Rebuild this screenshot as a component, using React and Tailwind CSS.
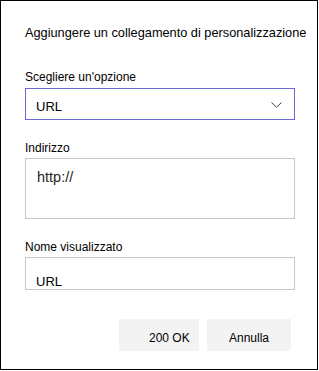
export default function App() {
  const font = { fontFamily: '"Liberation Sans", Arial, sans-serif' };
  return (
    <div className="w-[319px] h-[371px] bg-white" style={font}>
      <div className="w-[318px] h-[370px] border border-black bg-white pl-[24px] pt-[24px] flex flex-col text-black">
        <div className="text-[12.75px] leading-[16px] whitespace-nowrap">
          Aggiungere un collegamento di personalizzazione
        </div>
        <div className="mt-[28px] text-[12px] leading-[16px]">Scegliere un'opzione</div>
        <div className="mt-[3px] w-[270px] h-[32px] border border-[#6b69d6] flex items-center justify-between pl-[10px] pr-[12px]">
          <span className="text-[13px] leading-[16px] pt-[6px]">URL</span>
          <svg width="11" height="6" viewBox="0 0 11 6" className="mt-[1px]">
            <path d="M0.5 0.5 L5.5 5.2 L10.5 0.5" fill="none" stroke="#444" strokeWidth="1" />
          </svg>
        </div>
        <div className="mt-[20px] text-[12px] leading-[16px]">Indirizzo</div>
        <div className="mt-[2px] w-[270px] h-[61px] border border-[#c8c8c8] pl-[11px] pt-[6px]">
          <span className="text-[14.5px] leading-[16px] text-[#252423]">http://</span>
        </div>
        <div className="mt-[20px] text-[12px] leading-[16px]">Nome visualizzato</div>
        <div className="mt-[2px] w-[270px] h-[33px] border border-[#c8c8c8] pl-[10px] pt-[11px]">
          <span className="text-[13px] leading-[16px]">URL</span>
        </div>
        <div className="mt-[29px] w-[266px] flex justify-end gap-[8px]">
          <div className="w-[80px] h-[32px] bg-[#f3f3f3] pl-[30px] pt-[11px] text-[12px] leading-[16px] whitespace-nowrap">
            200 OK
          </div>
          <div className="w-[84px] h-[32px] bg-[#f3f3f3] pt-[11px] text-[12px] leading-[16px] text-center">
            Annulla
          </div>
        </div>
      </div>
    </div>
  );
}
